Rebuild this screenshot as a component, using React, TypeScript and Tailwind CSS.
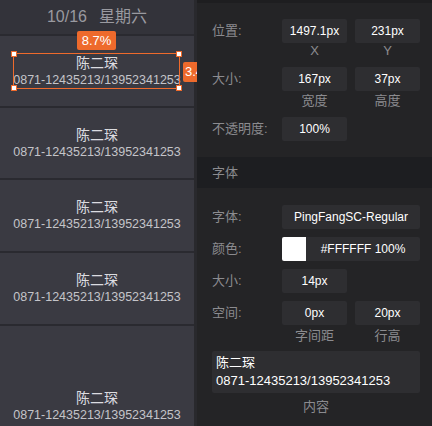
import type { ReactNode } from 'react'

const font = { fontFamily: '"Liberation Sans", "Noto Sans CJK SC", sans-serif' }

const rows = [
  { h: 'h-[72px]' },
  { h: 'h-[72px]' },
  { h: 'h-[73px]' },
  { h: 'h-[73px]' },
  { h: 'h-[162px]' },
]

function Card({ h }: { h: string }) {
  return (
    <div className={`${h} flex shrink-0 flex-col items-center justify-center border-b-2 border-[#2a2a30]`}>
      <div className="text-[14px] leading-[18px] text-[#dcdce0]">陈二琛</div>
      <div className="text-[12.5px] leading-[17px] text-[#c4c4c9]">0871-12435213/13952341253</div>
    </div>
  )
}

function Handle({ className }: { className: string }) {
  return <div className={`absolute h-[6px] w-[6px] border border-[#ee6a2c] bg-white ${className}`} />
}

function Box({ children, wide }: { children: ReactNode; wide?: boolean }) {
  return (
    <div
      className={`${wide ? 'w-[138px]' : 'w-[65px]'} flex h-6 items-center justify-center rounded-[2px] bg-[#2e2e31] text-[12px] text-white`}
    >
      {children}
    </div>
  )
}

function Row({ label, children }: { label: string; children: ReactNode }) {
  return (
    <div className="flex items-center">
      <div className="w-[70px] text-[13px] text-[#8b8b8f]">{label}</div>
      <div className="flex gap-2">{children}</div>
    </div>
  )
}

function Sub({ a, b, h }: { a: string; b: string; h: string }) {
  return (
    <div className={`flex ${h} items-center pl-[70px] text-[13px] text-[#8b8b8f]`}>
      <div className="w-[65px] text-center">{a}</div>
      <div className="ml-2 w-[65px] text-center">{b}</div>
    </div>
  )
}

export default function App() {
  return (
    <div className="flex h-[426px] w-[432px] overflow-hidden bg-[#242426]" style={font}>
      <div className="relative flex w-[197px] shrink-0 overflow-hidden">
        <div className="flex w-[194px] shrink-0 flex-col bg-[#3a3a42]">
          <div className="flex h-[36px] shrink-0 items-center justify-center gap-3 border-b-2 border-[#2a2a30] bg-[#33333a] text-[16px] text-[#9a9aa0]">
            <span>10/16</span>
            <span>星期六</span>
          </div>
          {rows.map((r, i) => (
            <Card key={i} h={r.h} />
          ))}
        </div>
        <div className="w-[3px] shrink-0 bg-[#29292d]" />

        <div className="absolute left-[13px] top-[53px] h-[36px] w-[167px] border border-[#ee6a2c]">
          <Handle className="-left-[3px] -top-[3px]" />
          <Handle className="-right-[3px] -top-[3px]" />
          <Handle className="-bottom-[3px] -left-[3px]" />
          <Handle className="-bottom-[3px] -right-[3px]" />
        </div>
        <div className="absolute left-[77px] top-[31px] flex h-[19px] w-[39px] items-center justify-center rounded-[2px] bg-[#ee6a2c] text-[13px] text-white">
          8.7%
        </div>
        <div className="absolute left-[183px] top-[62px] flex h-[20px] w-[36px] items-center rounded-[2px] bg-[#ee6a2c] pl-[2px] text-[13px] text-white">
          3.4%
        </div>
      </div>

      <div className="flex flex-1 flex-col border-t-[3px] border-[#1e1e20]">
        <div className="flex flex-col pl-[15px]">
          <div className="mt-4">
            <Row label="位置:">
              <Box>1497.1px</Box>
              <Box>231px</Box>
            </Row>
          </div>
          <Sub a="X" b="Y" h="h-4" />
          <div className="mt-2">
            <Row label="大小:">
              <Box>167px</Box>
              <Box>37px</Box>
            </Row>
          </div>
          <Sub a="宽度" b="高度" h="h-5" />
          <div className="mt-[6px]">
            <Row label="不透明度:">
              <Box>100%</Box>
            </Row>
          </div>
        </div>

        <div className="mt-4 flex h-[31px] items-center bg-[#1d1e21] pl-[15px] text-[13px] text-[#8b8b8f]">字体</div>

        <div className="flex flex-col pl-[15px]">
          <div className="mt-[17px]">
            <Row label="字体:">
              <Box wide>PingFangSC-Regular</Box>
            </Row>
          </div>
          <div className="mt-2">
            <Row label="颜色:">
              <div className="flex h-6 w-[138px] overflow-hidden rounded-[2px] bg-[#2e2e31]">
                <div className="w-6 bg-white" />
                <div className="flex flex-1 items-center justify-center text-[12px] text-white">#FFFFFF 100%</div>
              </div>
            </Row>
          </div>
          <div className="mt-2">
            <Row label="大小:">
              <Box>14px</Box>
            </Row>
          </div>
          <div className="mt-2">
            <Row label="空间:">
              <Box>0px</Box>
              <Box>20px</Box>
            </Row>
          </div>
          <Sub a="字间距" b="行高" h="h-[22px]" />
          <div className="mt-1 h-[42px] w-[208px] rounded-[2px] bg-[#2e2e31] px-1 pt-[3px] text-[13px] leading-[18px] text-white">
            <div>陈二琛</div>
            <div>0871-12435213/13952341253</div>
          </div>
          <div className="flex h-7 w-[208px] items-center justify-center text-[13px] text-[#8b8b8f]">内容</div>
        </div>
      </div>
    </div>
  )
}
